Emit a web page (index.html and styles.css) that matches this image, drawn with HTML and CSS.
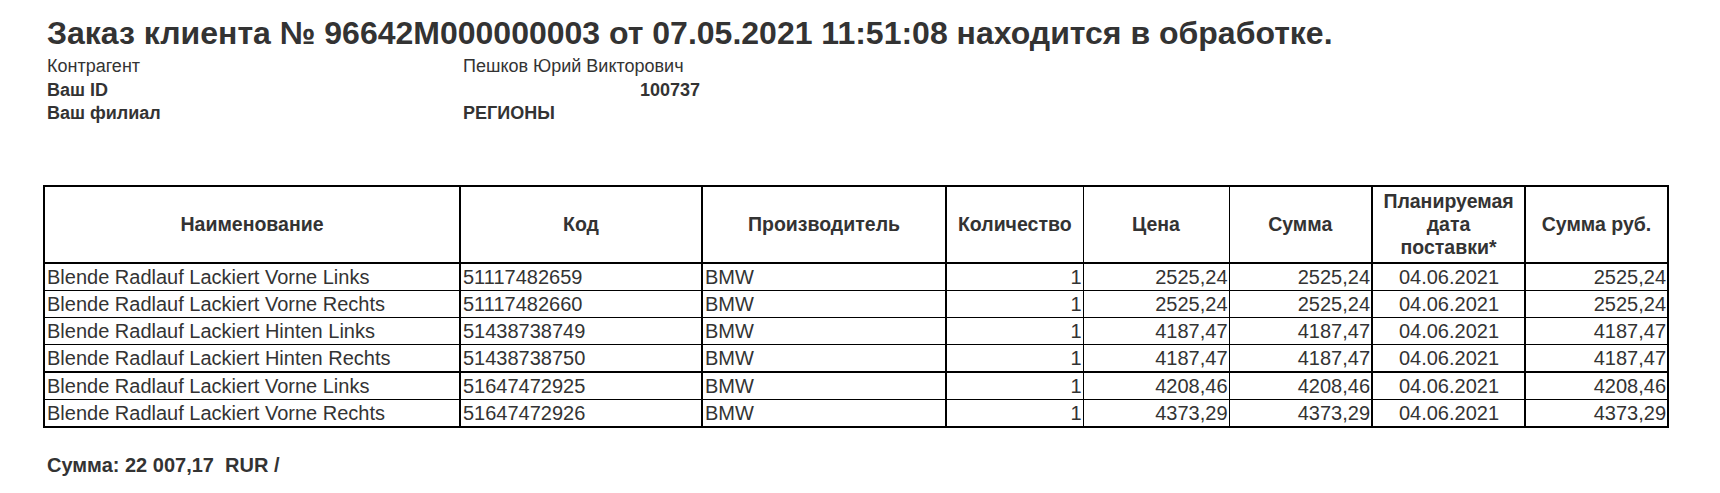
FILE: index.html
```html
<!DOCTYPE html>
<html lang="ru">
<head>
<meta charset="utf-8">
<title>Заказ клиента</title>
<link rel="stylesheet" href="styles.css">
</head>
<body>
<div class="page">
  <h1 class="title">Заказ клиента № 96642M000000003 от 07.05.2021 11:51:08 находится в обработке.</h1>
  <div class="info">
    <div class="info-label">Контрагент</div>
    <div class="info-value">Пешков Юрий Викторович</div>
    <div class="info-label bold">Ваш ID</div>
    <div class="info-value bold right">100737</div>
    <div class="info-label bold">Ваш филиал</div>
    <div class="info-value bold">РЕГИОНЫ</div>
  </div>
  <table class="orders">
    <colgroup>
      <col class="c1"><col class="c2"><col class="c3"><col class="c4"><col class="c5"><col class="c6"><col class="c7"><col class="c8">
    </colgroup>
    <thead>
      <tr>
        <th>Наименование</th>
        <th>Код</th>
        <th>Производитель</th>
        <th>Количество</th>
        <th>Цена</th>
        <th>Сумма</th>
        <th>Планируемая дата поставки*</th>
        <th>Сумма руб.</th>
      </tr>
    </thead>
    <tbody>
      <tr><td>Blende Radlauf Lackiert Vorne Links</td><td>51117482659</td><td>BMW</td><td class="r">1</td><td class="r">2525,24</td><td class="r">2525,24</td><td class="c">04.06.2021</td><td class="r">2525,24</td></tr>
      <tr><td>Blende Radlauf Lackiert Vorne Rechts</td><td>51117482660</td><td>BMW</td><td class="r">1</td><td class="r">2525,24</td><td class="r">2525,24</td><td class="c">04.06.2021</td><td class="r">2525,24</td></tr>
      <tr><td>Blende Radlauf Lackiert Hinten Links</td><td>51438738749</td><td>BMW</td><td class="r">1</td><td class="r">4187,47</td><td class="r">4187,47</td><td class="c">04.06.2021</td><td class="r">4187,47</td></tr>
      <tr><td>Blende Radlauf Lackiert Hinten Rechts</td><td>51438738750</td><td>BMW</td><td class="r">1</td><td class="r">4187,47</td><td class="r">4187,47</td><td class="c">04.06.2021</td><td class="r">4187,47</td></tr>
      <tr class="thick-top"><td>Blende Radlauf Lackiert Vorne Links</td><td>51647472925</td><td>BMW</td><td class="r">1</td><td class="r">4208,46</td><td class="r">4208,46</td><td class="c">04.06.2021</td><td class="r">4208,46</td></tr>
      <tr><td>Blende Radlauf Lackiert Vorne Rechts</td><td>51647472926</td><td>BMW</td><td class="r">1</td><td class="r">4373,29</td><td class="r">4373,29</td><td class="c">04.06.2021</td><td class="r">4373,29</td></tr>
    </tbody>
  </table>
  <p class="total">Сумма: 22 007,17&nbsp; RUR /</p>
</div>
</body>
</html>
```

FILE: styles.css
```css
html, body {
  margin: 0;
  padding: 0;
  background: #fff;
}
body {
  font-family: "Liberation Sans", Arial, sans-serif;
  color: #333;
}
.page {
  padding: 15px 0 0 43px;
}
.title {
  margin: 0 0 3px 4px;
  font-size: 32px;
  line-height: 37px;
  font-weight: bold;
  color: #333;
}
.info {
  display: grid;
  grid-template-columns: 416px 241px;
  grid-auto-rows: 23.5px;
  font-size: 18px;
  line-height: 23px;
  margin-bottom: 59px;
}
.info-label {
  padding-left: 4px;
  white-space: nowrap;
}
.info-value {
  padding-left: 4px;
  white-space: nowrap;
}
.bold {
  font-weight: bold;
}
.right {
  text-align: right;
}
.orders {
  border-collapse: collapse;
  table-layout: fixed;
  width: 1624px;
  border: 2px solid #000;
  font-size: 20px;
  color: #333;
}
.c1 { width: 416px; }
.c2 { width: 242px; }
.c3 { width: 244px; }
.c4 { width: 137px; }
.c5 { width: 146px; }
.c6 { width: 143px; }
.c7 { width: 153px; }
.c8 { width: 143px; }
.orders th {
  border: 1px solid #000;
  border-bottom: 2px solid #000;
  font-size: 19.5px;
  line-height: 23px;
  height: 71px;
  padding: 2px 3px;
  font-weight: bold;
  text-align: center;
  vertical-align: middle;
}
.orders td {
  border: 1px solid #000;
  height: 25px;
  line-height: 22px;
  padding: 1px 1px 0 2px;
  white-space: nowrap;
  overflow: hidden;
}
.orders th:nth-child(2), .orders td:nth-child(2),
.orders th:nth-child(3), .orders td:nth-child(3),
.orders th:nth-child(4), .orders td:nth-child(4),
.orders th:nth-child(7), .orders td:nth-child(7),
.orders th:nth-child(8), .orders td:nth-child(8) {
  border-left-width: 2px;
}
.orders tr.thick-top td {
  border-top-width: 2px;
}
.orders td.r {
  text-align: right;
}
.orders td.c {
  text-align: center;
}
.total {
  margin: 26px 0 0 4px;
  font-size: 20px;
  line-height: 23px;
  font-weight: bold;
}
```
